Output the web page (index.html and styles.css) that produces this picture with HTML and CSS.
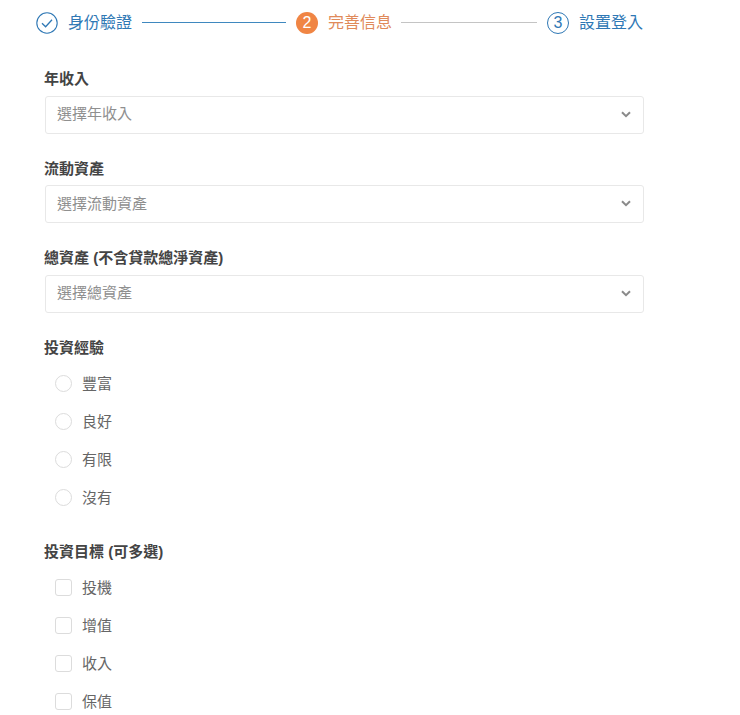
FILE: index.html
```html
<!DOCTYPE html>
<html lang="zh-Hant">
<head>
<meta charset="utf-8">
<title>完善信息</title>
<link rel="stylesheet" href="styles.css">
</head>
<body>
<div class="page">
  <div class="steps">
    <div class="step done">
      <svg class="step-icon" viewBox="0 0 22 22"><circle cx="11" cy="11" r="10.2" fill="none" stroke="#2f78b5" stroke-width="1.1"/><path d="M6 11.3l3.6 3.4 6.4-7" fill="none" stroke="#2f78b5" stroke-width="1.3"/></svg>
      <span class="step-text">身份驗證</span>
    </div>
    <div class="line line-a"></div>
    <div class="step current">
      <span class="step-num">2</span>
      <span class="step-text">完善信息</span>
    </div>
    <div class="line line-b"></div>
    <div class="step todo">
      <span class="step-num">3</span>
      <span class="step-text">設置登入</span>
    </div>
  </div>

  <form class="form">
    <div class="field">
      <div class="label">年收入</div>
      <div class="select"><span class="placeholder">選擇年收入</span><svg class="chev" viewBox="0 0 10 7"><path d="M1 1.2l4 4 4-4" fill="none" stroke="#8a8a8a" stroke-width="2"/></svg></div>
    </div>
    <div class="field">
      <div class="label">流動資產</div>
      <div class="select"><span class="placeholder">選擇流動資產</span><svg class="chev" viewBox="0 0 10 7"><path d="M1 1.2l4 4 4-4" fill="none" stroke="#8a8a8a" stroke-width="2"/></svg></div>
    </div>
    <div class="field">
      <div class="label">總資產 (不含貸款總淨資產)</div>
      <div class="select"><span class="placeholder">選擇總資產</span><svg class="chev" viewBox="0 0 10 7"><path d="M1 1.2l4 4 4-4" fill="none" stroke="#8a8a8a" stroke-width="2"/></svg></div>
    </div>
    <div class="group">
      <div class="label">投資經驗</div>
      <div class="option"><span class="radio"></span><span class="opt-text">豐富</span></div>
      <div class="option"><span class="radio"></span><span class="opt-text">良好</span></div>
      <div class="option"><span class="radio"></span><span class="opt-text">有限</span></div>
      <div class="option"><span class="radio"></span><span class="opt-text">沒有</span></div>
    </div>
    <div class="group group-goals">
      <div class="label">投資目標 (可多選)</div>
      <div class="option"><span class="check"></span><span class="opt-text">投機</span></div>
      <div class="option"><span class="check"></span><span class="opt-text">增值</span></div>
      <div class="option"><span class="check"></span><span class="opt-text">收入</span></div>
      <div class="option"><span class="check"></span><span class="opt-text">保值</span></div>
    </div>
  </form>
</div>
</body>
</html>
```
FILE: styles.css
```css
html, body {
  margin: 0;
  padding: 0;
  background: #fff;
}
body {
  font-family: "Liberation Sans", "Noto Sans CJK TC", sans-serif;
  overflow: hidden;
  height: 715px;
}
.page {
  padding: 12px 0 0 36px;
}
.steps {
  display: flex;
  align-items: center;
  width: 608px;
  height: 21px;
}
.step {
  display: flex;
  align-items: center;
  gap: 10px;
  font-size: 16px;
  line-height: 21px;
}
.step-icon {
  width: 22px;
  height: 22px;
}
.step-num {
  width: 22px;
  height: 22px;
  border-radius: 50%;
  box-sizing: border-box;
  display: flex;
  align-items: center;
  justify-content: center;
  font-size: 16px;
}
.done { color: #2f78b5; }
.current { color: #e08a5a; }
.current .step-num { background: #f08544; color: #fff; }
.todo { color: #2f78b5; }
.todo .step-num { border: 1px solid #2f78b5; }
.line {
  height: 1px;
  margin: 0 10px;
}
.line-a { background: #3f88bf; width: 144px; }
.line-b { background: #c4c4c4; width: 136px; margin-left: 9px; }
.form {
  margin-left: 8px;
  width: 600px;
  padding-top: 35px;
}
.label {
  font-size: 15px;
  line-height: 22px;
  font-weight: 700;
  color: #444;
}
.field {
  height: 89.5px;
}
.select {
  margin: 5.75px 0 0 1px;
  box-sizing: border-box;
  height: 38px;
  width: 599px;
  border: 1px solid #e8e8e8;
  border-radius: 3px;
  padding: 0 12px 0 11px;
  display: flex;
  align-items: center;
  justify-content: space-between;
  font-size: 15px;
  color: #8f8f8f;
}
.placeholder {
  margin-bottom: 4px;
}
.chev {
  width: 10px;
  height: 7px;
  margin-bottom: 1px;
}
.group {
  margin-bottom: 24px;
}
.group .label {
  margin-bottom: 6px;
}
.option {
  display: flex;
  align-items: center;
  gap: 10px;
  height: 38px;
  padding-left: 11px;
  font-size: 15px;
  color: #666;
}
.opt-text {
  margin-bottom: 2px;
}
.group-goals .opt-text {
  margin-bottom: 3px;
}
.radio, .check {
  box-sizing: border-box;
  width: 17px;
  height: 17px;
  border: 1px solid #dcdcdc;
  background: #fff;
}
.radio { border-radius: 50%; }
.check { border-radius: 3px; }
```
